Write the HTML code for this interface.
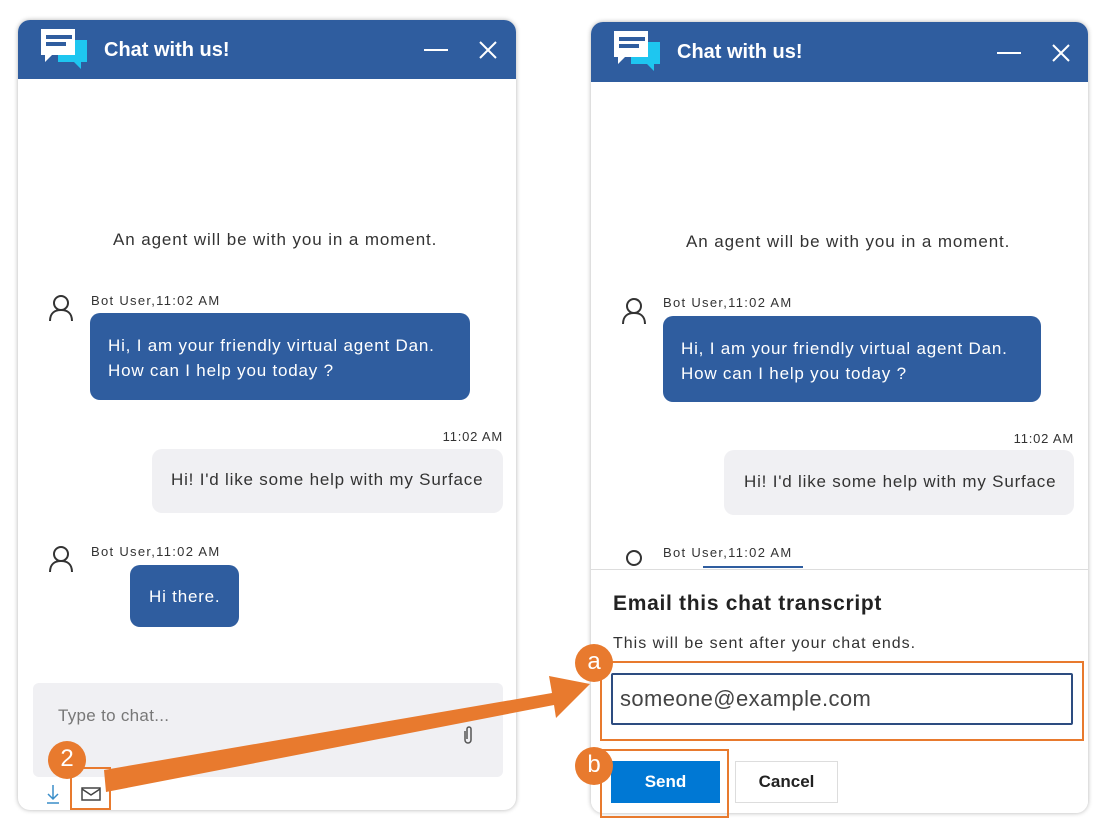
<!DOCTYPE html><html><head><style>
*{margin:0;padding:0;box-sizing:border-box}
body{width:1120px;height:834px;background:#fff;position:relative;overflow:hidden;font-family:"Liberation Sans",sans-serif;color:#333}
.a{position:absolute}
.panel{position:absolute;background:#fff;border-radius:12px;box-shadow:0 0 5px rgba(0,0,0,.3);overflow:hidden}
.hdr{position:absolute;left:0;top:0;right:0;height:59px;background:#2f5d9f}
.ttl{position:absolute;left:86px;top:19px;color:#fff;font-size:20px;font-weight:bold}
.t{position:absolute;white-space:nowrap}
.bu{font-size:13px;letter-spacing:1.3px}
.bb{position:absolute;background:#2f5d9f;color:#fff;border-radius:10px;font-size:17px;line-height:25px;letter-spacing:.8px}
.gb{position:absolute;background:#f0f0f3;border-radius:10px;font-size:17px;letter-spacing:.8px}
.circ{position:absolute;width:38px;height:38px;border-radius:50%;background:#e87a2e;color:#fff;font-size:24px;text-align:center;line-height:36px}
.ob{position:absolute;border:2px solid #e87a2e}
</style></head><body>

<!-- LEFT -->
<div class="panel" style="left:18px;top:20px;width:498px;height:790px">
 <div class="hdr">
  <svg class="a" style="left:20px;top:7px" width="52" height="46"><path d="M3 2h34v26H14l-7 7v-7H3z" fill="#fff"/><rect x="8" y="8" width="26" height="4" fill="#2f5d9f"/><rect x="8" y="15" width="20" height="4" fill="#2f5d9f"/><path d="M37 13h12v22h-6v7l-7-7H20v-7h17z" fill="#1ec6f0"/></svg>
  <div class="ttl">Chat with us!</div>
  <div class="a" style="left:406px;top:29px;width:24px;height:2px;background:#fff"></div>
  <svg class="a" style="left:460px;top:20px" width="20" height="20"><path d="M2 2L18 18M18 2L2 18" stroke="#fff" stroke-width="2"/></svg>
 </div>
 <div class="t" style="left:95px;top:210px;font-size:17px;letter-spacing:.9px">An agent will be with you in a moment.</div>
 <svg class="a" style="left:30px;top:274px" width="26" height="28"><circle cx="13" cy="9" r="7" fill="none" stroke="#333" stroke-width="2"/><path d="M2 27c0-8 5-11 11-11s11 3 11 11" fill="none" stroke="#333" stroke-width="2"/></svg>
 <div class="t bu" style="left:73px;top:273px">Bot User,11:02 AM</div>
 <div class="bb" style="left:72px;top:293px;width:380px;height:87px;padding:20px 0 0 18px">Hi, I am your friendly virtual agent Dan.<br>How can I help you today ?</div>
 <div class="t" style="right:13px;top:409px;font-size:13px;letter-spacing:.8px">11:02 AM</div>
 <div class="gb" style="left:134px;top:429px;width:351px;height:64px;padding:21px 0 0 19px">Hi! I'd like some help with my Surface</div>
 <svg class="a" style="left:30px;top:525px" width="26" height="28"><circle cx="13" cy="9" r="7" fill="none" stroke="#333" stroke-width="2"/><path d="M2 27c0-8 5-11 11-11s11 3 11 11" fill="none" stroke="#333" stroke-width="2"/></svg>
 <div class="t bu" style="left:73px;top:524px">Bot User,11:02 AM</div>
 <div class="bb" style="left:112px;top:545px;width:109px;height:62px;padding:19px 0 0 19px">Hi there.</div>
 <div class="a" style="left:15px;top:663px;width:470px;height:94px;background:#f0f0f3;border-radius:6px"></div>
 <div class="t" style="left:40px;top:686px;font-size:17px;color:#777;letter-spacing:.3px">Type to chat...</div>
 <svg class="a" style="left:444px;top:705px" width="12" height="20"><path d="M3 6v9a3 3 0 006 0V4a2 2 0 00-4 0v10" fill="none" stroke="#555" stroke-width="1.5"/></svg>
 <svg class="a" style="left:27px;top:763px" width="16" height="22"><path d="M8 2v14M3 11l5 5 5-5M2 20h12" fill="none" stroke="#3a8ec9" stroke-width="1.5"/></svg>
 <svg class="a" style="left:63px;top:767px" width="20" height="14"><rect x="1" y="1" width="18" height="12" fill="none" stroke="#444" stroke-width="1.5"/><path d="M1 2l9 6 9-6" fill="none" stroke="#444" stroke-width="1.5"/></svg>
</div>

<!-- RIGHT -->
<div class="panel" style="left:591px;top:22px;width:497px;height:791px">
 <div class="hdr" style="height:60px">
  <svg class="a" style="left:20px;top:7px" width="52" height="46"><path d="M3 2h34v26H14l-7 7v-7H3z" fill="#fff"/><rect x="8" y="8" width="26" height="4" fill="#2f5d9f"/><rect x="8" y="15" width="20" height="4" fill="#2f5d9f"/><path d="M37 13h12v22h-6v7l-7-7H20v-7h17z" fill="#1ec6f0"/></svg>
  <div class="ttl">Chat with us!</div>
  <div class="a" style="left:406px;top:30px;width:24px;height:2px;background:#fff"></div>
  <svg class="a" style="left:460px;top:21px" width="20" height="20"><path d="M2 2L18 18M18 2L2 18" stroke="#fff" stroke-width="2"/></svg>
 </div>
 <div class="t" style="left:95px;top:210px;font-size:17px;letter-spacing:.9px">An agent will be with you in a moment.</div>
 <svg class="a" style="left:30px;top:275px" width="26" height="28"><circle cx="13" cy="9" r="7" fill="none" stroke="#333" stroke-width="2"/><path d="M2 27c0-8 5-11 11-11s11 3 11 11" fill="none" stroke="#333" stroke-width="2"/></svg>
 <div class="t bu" style="left:72px;top:273px">Bot User,11:02 AM</div>
 <div class="bb" style="left:72px;top:294px;width:378px;height:86px;padding:20px 0 0 18px">Hi, I am your friendly virtual agent Dan.<br>How can I help you today ?</div>
 <div class="t" style="right:14px;top:409px;font-size:13px;letter-spacing:.8px">11:02 AM</div>
 <div class="gb" style="left:133px;top:428px;width:350px;height:65px;padding:22px 0 0 20px">Hi! I'd like some help with my Surface</div>
 <svg class="a" style="left:30px;top:527px" width="26" height="20"><circle cx="13" cy="9" r="7" fill="none" stroke="#333" stroke-width="2"/></svg>
 <div class="t bu" style="left:72px;top:523px">Bot User,11:02 AM</div>
 <div class="a" style="left:112px;top:544px;width:100px;height:2px;background:#2f5d9f"></div>
 <div class="a" style="left:0;top:547px;width:497px;height:244px;background:#fff;border-top:1px solid #ddd"></div>
 <div class="t" style="left:22px;top:570px;font-size:21px;font-weight:bold;color:#222;letter-spacing:.7px">Email this chat transcript</div>
 <div class="t" style="left:22px;top:613px;font-size:16px;letter-spacing:1px">This will be sent after your chat ends.</div>
 <div class="a" style="left:20px;top:651px;width:462px;height:52px;border:2px solid #2d4c80;border-radius:2px"></div>
 <div class="t" style="left:29px;top:664px;font-size:22px;color:#444;letter-spacing:.4px">someone@example.com</div>
 <div class="a" style="left:20px;top:739px;width:109px;height:42px;background:#0078d4;color:#fff;font-size:17px;font-weight:bold;text-align:center;line-height:42px">Send</div>
 <div class="a" style="left:144px;top:739px;width:103px;height:42px;border:1px solid #ddd;font-size:17px;font-weight:bold;text-align:center;line-height:40px;color:#222">Cancel</div>
</div>

<!-- annotations -->
<div class="ob" style="left:70px;top:767px;width:41px;height:43px"></div>
<svg class="a" style="left:0;top:0" width="1120" height="834"><path d="M104 770L552 693L549 676L590 684L556 718L554 705L106 792z" fill="#e87a2e"/></svg>
<div class="circ" style="left:48px;top:741px">2</div>
<div class="ob" style="left:600px;top:661px;width:484px;height:80px"></div>
<div class="ob" style="left:600px;top:749px;width:129px;height:69px"></div>
<div class="circ" style="left:575px;top:644px">a</div>
<div class="circ" style="left:575px;top:747px">b</div>
</body></html>
